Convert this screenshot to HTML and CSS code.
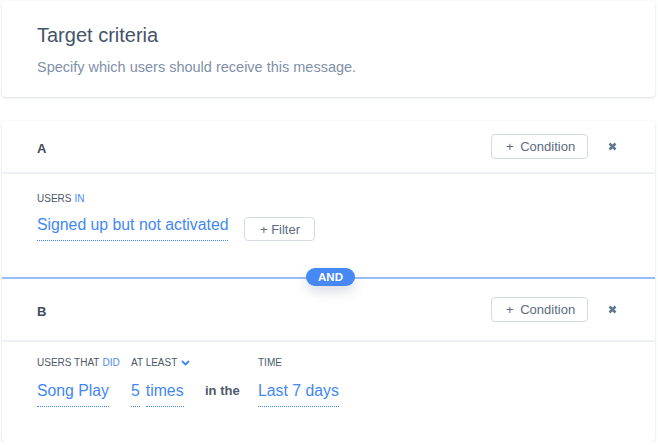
FILE: index.html
```html
<!DOCTYPE html>
<html>
<head>
<meta charset="utf-8">
<link rel="stylesheet" href="styles.css">
</head>
<body>
<div class="page">
  <section class="card intro">
    <h1 class="title">Target criteria</h1>
    <p class="subtitle">Specify which users should receive this message.</p>
  </section>

  <section class="card criteria">
    <div class="group-head head-a">
      <span class="group-name">A</span>
      <div class="head-actions">
        <button class="btn btn-cond"><span class="plus">+</span> Condition</button>
        <span class="close"><svg width="9" height="9" viewBox="0 0 9 9"><path d="M1.5 1.5L7.5 7.5M7.5 1.5L1.5 7.5" stroke="#617892" stroke-width="2.6" stroke-linecap="butt"/></svg></span>
      </div>
    </div>
    <div class="group-body body-a">
      <div class="label">USERS <span class="accent">IN</span></div>
      <div class="row-a">
        <span class="value">Signed up but not activated</span>
        <button class="btn btn-filter">+ Filter</button>
      </div>
    </div>

    <div class="divider"><span class="pill">AND</span></div>

    <div class="group-head head-b">
      <span class="group-name">B</span>
      <div class="head-actions">
        <button class="btn btn-cond"><span class="plus">+</span> Condition</button>
        <span class="close"><svg width="9" height="9" viewBox="0 0 9 9"><path d="M1.5 1.5L7.5 7.5M7.5 1.5L1.5 7.5" stroke="#617892" stroke-width="2.6" stroke-linecap="butt"/></svg></span>
      </div>
    </div>
    <div class="group-body body-b">
      <div class="grid-b">
        <div class="label">USERS THAT <span class="accent">DID</span></div>
        <div class="label">AT LEAST <svg class="chev" width="9" height="6" viewBox="0 0 9 6"><path d="M1 1L4.5 4.5L8 1" fill="none" stroke="#3f86f4" stroke-width="1.8"/></svg></div>
        <div></div>
        <div class="label">TIME</div>
        <div class="vcell"><span class="value">Song Play</span></div>
        <div class="vcell"><span class="value">5</span><span class="value times">times</span></div>
        <div class="vcell"><span class="connector">in the</span></div>
        <div class="vcell"><span class="value">Last 7 days</span></div>
      </div>
    </div>
  </section>
</div>
</body>
</html>
```

FILE: styles.css
```css
html, body {
  margin: 0;
  padding: 0;
  background: #ffffff;
}

body {
  font-family: "Liberation Sans", Arial, sans-serif;
  color: #3e4c5e;
}

.page {
  padding: 1px 3px 0 2px;
  display: flex;
  flex-direction: column;
  gap: 24px;
}

.card {
  background: #fff;
  border-radius: 4px;
  box-shadow: 0 1px 3px rgba(40, 55, 80, 0.16), 0 0 1px rgba(40, 55, 80, 0.08);
}

.intro {
  height: 96px;
  box-sizing: border-box;
  padding: 22px 35px 0;
}

.title {
  margin: 0;
  font-size: 20px;
  line-height: 24px;
  font-weight: normal;
  color: #455468;
}

.subtitle {
  margin: 11px 0 0;
  font-size: 14.5px;
  line-height: 18px;
  color: #7f90a8;
}

.criteria {
  height: 321px;
  display: flex;
  flex-direction: column;
}

.group-head {
  display: flex;
  align-items: center;
  justify-content: space-between;
  padding: 0 38px 0 35px;
  border-bottom: 2px solid #edf0f4;
}

.head-a {
  height: 51px;
}

.head-b {
  height: 61px;
}

.group-name {
  font-weight: bold;
  font-size: 13px;
  color: #3e4b5c;
  padding-top: 3px;
}

.head-actions {
  display: flex;
  align-items: center;
}

.btn {
  font-family: "Liberation Sans", Arial, sans-serif;
  background: #fff;
  border: 1px solid #d4dbe4;
  border-radius: 4px;
  color: #5b6b80;
  height: 25px;
  box-sizing: border-box;
  cursor: pointer;
  white-space: nowrap;
}

.btn-cond {
  font-size: 13px;
  padding: 0 14px;
  width: 97px;
}

.plus {
  margin-right: 3px;
}

.btn-filter {
  font-size: 13px;
  padding: 0 14px;
  width: 71px;
  height: 24px;
  margin-left: 16px;
}

.close {
  display: flex;
  margin-left: 20px;
  width: 9px;
  height: 9px;
}

.group-body {
  padding: 0 35px;
}

.body-a {
  height: 102px;
  padding-top: 19px;
  box-sizing: border-box;
}

.body-b {
  flex: 1;
  padding-top: 15px;
  box-sizing: border-box;
}

.label {
  font-size: 10px;
  line-height: 12px;
  color: #4b5869;
  white-space: nowrap;
  display: flex;
  align-items: center;
}

.label .accent,
.accent {
  color: #4a8af4;
  margin-left: 3px;
}

.chev {
  margin-left: 4px;
}

.row-a {
  margin-top: 10px;
  display: flex;
  align-items: flex-end;
}

.value {
  font-size: 15.8px;
  line-height: 20px;
  color: #4287f5;
  padding-bottom: 5px;
  border-bottom: 1px dotted #4287f5;
  white-space: nowrap;
}

.times {
  margin-left: 6px;
}

.divider {
  position: relative;
  height: 2px;
  background: #9bbdf6;
  margin-top: 1px;
}

.pill {
  position: absolute;
  left: 304px;
  top: -9px;
  width: 49px;
  height: 18px;
  border-radius: 9px;
  background: #4689f5;
  color: #fff;
  font-weight: bold;
  font-size: 11.5px;
  line-height: 18px;
  text-align: center;
  box-shadow: 0 6px 12px rgba(60, 70, 110, 0.18);
}

.grid-b {
  display: grid;
  grid-template-columns: 94px 74px 53px auto;
  row-gap: 12px;
}

.vcell {
  display: flex;
  align-items: flex-start;
}

.connector {
  font-size: 13px;
  font-weight: bold;
  line-height: 20px;
  color: #4d5a6b;
}
```
